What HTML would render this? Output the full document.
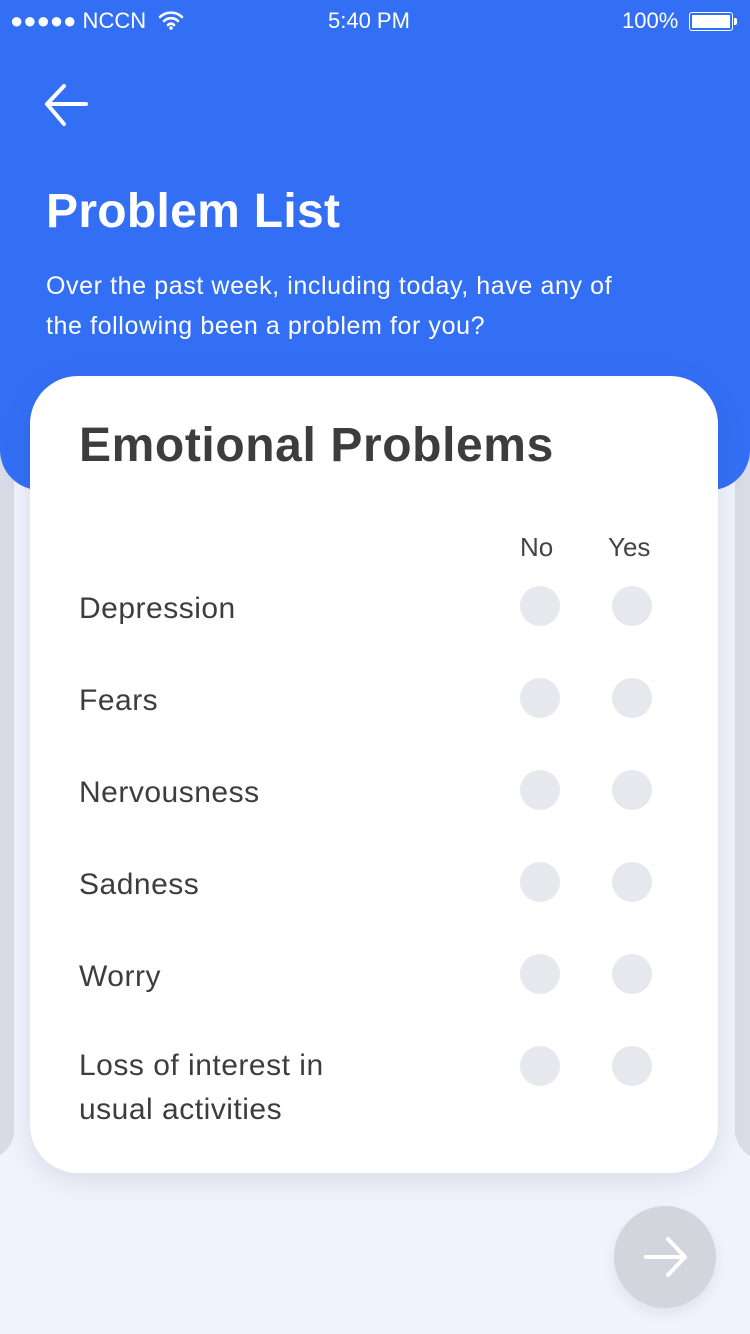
<!DOCTYPE html>
<html><head><meta charset="utf-8"><style>
*{margin:0;padding:0;box-sizing:border-box}
body{width:750px;height:1334px;position:relative;overflow:hidden;background:#f1f4fc;font-family:"Liberation Sans",sans-serif}
.side{position:absolute;top:376px;height:784px;width:60px;background:#d9dce6;border-radius:40px}
.hdr{position:absolute;left:0;top:0;width:750px;height:490px;background:#336ff5;border-radius:0 0 40px 40px}
.sb{position:absolute;top:8px;color:#fff;font-size:22px}
.card{position:absolute;left:30px;top:376px;width:688px;height:797px;background:#fff;border-radius:48px;box-shadow:0 8px 30px rgba(40,50,90,.12)}
.lbl{position:absolute;left:49px;font-size:30px;color:#3d3d3d;letter-spacing:.5px}
.c{position:absolute;width:40px;height:40px;border-radius:50%;background:#e7e8ee}
</style></head><body>
<div class="side" style="left:-46px"></div>
<div class="side" style="left:735px"></div>
<div class="hdr"></div>
<div class="sb" style="left:10px">●●●●● NCCN
<svg width="26" height="20" viewBox="0 0 26 20" style="vertical-align:-2px;margin-left:6px"><path d="M2 7 A16 16 0 0 1 24 7 M6 11 A10 10 0 0 1 20 11 M10 15 A4 4 0 0 1 16 15" stroke="#fff" stroke-width="2.6" fill="none" stroke-linecap="round"/><circle cx="13" cy="18" r="1.8" fill="#fff"/></svg></div>
<div class="sb" style="left:328px">5:40 PM</div>
<div class="sb" style="left:622px">100%</div>
<div style="position:absolute;left:689px;top:12px;width:44px;height:19px;border:1.5px solid #fff;border-radius:3px;padding:2px"><div style="background:#fff;width:100%;height:100%"></div></div>
<div style="position:absolute;left:734px;top:18px;width:3px;height:7px;background:#fff;border-radius:0 2px 2px 0"></div>
<svg style="position:absolute;left:44px;top:82px" width="46" height="46" viewBox="0 0 46 46"><path d="M3 22 H42 M3 22 L20 4 M3 22 L20 42" stroke="#fff" stroke-width="4" fill="none" stroke-linecap="round" stroke-linejoin="round"/></svg>
<div style="position:absolute;left:46px;top:184px;color:#fff;font-size:48px;font-weight:bold;letter-spacing:.3px">Problem List</div>
<div style="position:absolute;left:46px;top:266px;color:#fff;font-size:25px;line-height:40px;width:585px;letter-spacing:.6px">Over the past week, including today, have any of the following been a problem for you?</div>
<div class="card">
<div style="position:absolute;left:49px;top:42px;font-size:48px;font-weight:bold;color:#3d3d3d;letter-spacing:.6px">Emotional Problems</div>
<div style="position:absolute;left:490px;top:156px;font-size:26px;color:#444">No</div>
<div style="position:absolute;left:578px;top:156px;font-size:26px;color:#444">Yes</div>
<div class="lbl" style="top:216px">Depression</div>
<div class="lbl" style="top:308px">Fears</div>
<div class="lbl" style="top:400px">Nervousness</div>
<div class="lbl" style="top:492px">Sadness</div>
<div class="lbl" style="top:584px">Worry</div>
<div class="lbl" style="top:668px;line-height:44px">Loss of interest in<br>usual activities</div>
<div class="c" style="left:490px;top:210px"></div><div class="c" style="left:582px;top:210px"></div>
<div class="c" style="left:490px;top:302px"></div><div class="c" style="left:582px;top:302px"></div>
<div class="c" style="left:490px;top:394px"></div><div class="c" style="left:582px;top:394px"></div>
<div class="c" style="left:490px;top:486px"></div><div class="c" style="left:582px;top:486px"></div>
<div class="c" style="left:490px;top:578px"></div><div class="c" style="left:582px;top:578px"></div>
<div class="c" style="left:490px;top:670px"></div><div class="c" style="left:582px;top:670px"></div>
</div>
<div style="position:absolute;left:614px;top:1206px;width:102px;height:102px;border-radius:50%;background:#d3d5dd;box-shadow:0 6px 16px rgba(0,0,0,.08)"></div>
<svg style="position:absolute;left:642px;top:1235px" width="46" height="44" viewBox="0 0 46 44"><path d="M43 22 H4 M43 22 L26 4 M43 22 L26 40" stroke="#fff" stroke-width="4" fill="none" stroke-linecap="round" stroke-linejoin="round"/></svg>
</body></html>
